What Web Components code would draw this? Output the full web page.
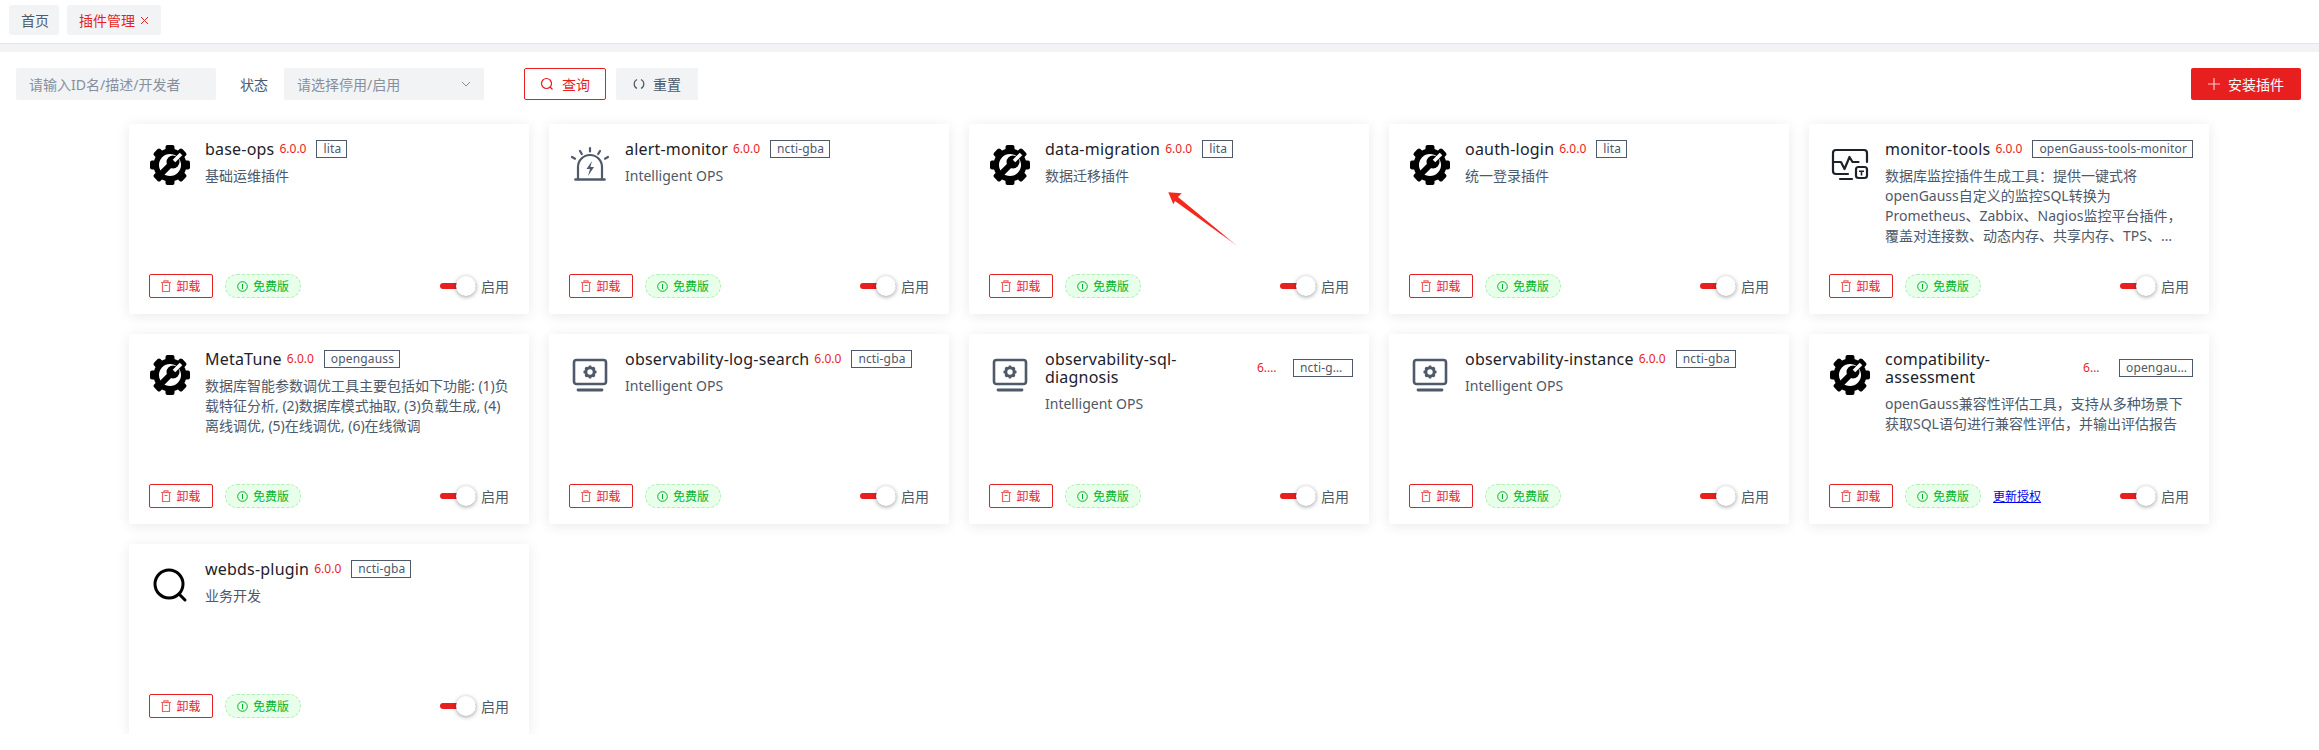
<!DOCTYPE html>
<html>
<head>
<meta charset="utf-8">
<title>插件管理</title>
<style>
  html, body { margin: 0; background: #fff; }
  body { font-family: "Noto Sans", "Noto Sans CJK SC", sans-serif; color: #1d2129; }
</style>
</head>
<body>
<top-tabs></top-tabs>
<filter-bar></filter-bar>
<plugin-grid>
  <plugin-card name="base-ops" tag="lita" icon="gear">基础运维插件</plugin-card>
  <plugin-card name="alert-monitor" tag="ncti-gba" icon="siren">Intelligent OPS</plugin-card>
  <plugin-card name="data-migration" tag="lita" icon="gear" arrow>数据迁移插件</plugin-card>
  <plugin-card name="oauth-login" tag="lita" icon="gear">统一登录插件</plugin-card>
  <plugin-card name="monitor-tools" tag="openGauss-tools-monitor" icon="tools">数据库监控插件生成工具：提供一键式将openGauss自定义的监控SQL转换为Prometheus、Zabbix、Nagios监控平台插件，覆盖对连接数、动态内存、共享内存、TPS、…</plugin-card>
  <plugin-card name="MetaTune" tag="opengauss" icon="gear">数据库智能参数调优工具主要包括如下功能: (1)负载特征分析, (2)数据库模式抽取, (3)负载生成, (4)离线调优, (5)在线调优, (6)在线微调</plugin-card>
  <plugin-card name="observability-log-search" tag="ncti-gba" icon="screen">Intelligent OPS</plugin-card>
  <plugin-card name="observability-sql-diagnosis" tag="ncti-gba" icon="screen" squeeze="212,25,11,60">Intelligent OPS</plugin-card>
  <plugin-card name="observability-instance" tag="ncti-gba" icon="screen">Intelligent OPS</plugin-card>
  <plugin-card name="compatibility-assessment" tag="opengauss" icon="gear" squeeze="198,19,17,74" license>openGauss兼容性评估工具，支持从多种场景下获取SQL语句进行兼容性评估，并输出评估报告</plugin-card>
  <plugin-card name="webds-plugin" tag="ncti-gba" icon="search">业务开发</plugin-card>
</plugin-grid>

<script>
// icons for the cards, all in a 42x42 box
const gearTeeth = [0, 45, 90, 135, 180, 225, 270, 315]
  .map(a => `<rect x="16.500" y="1" width="9" height="9" rx="2" transform="rotate(${a} 21 21)"/>`).join('');
const ICONS = {
  gear: `<g fill="#000">${gearTeeth}<circle cx="21" cy="21" r="16.500"/></g>
    <circle cx="21" cy="21" r="11" fill="#fff"/>
    <path d="M11 31 L22 20" stroke="#000" stroke-width="6" fill="none"/>
    <circle cx="24" cy="18" r="6.500" fill="#000"/>
    <path d="M25 17 L32 10" stroke="#fff" stroke-width="3.600" fill="none"/>`,
  siren: `<g fill="none" stroke="#4e5969" stroke-width="2.200" stroke-linecap="round">
      <path d="M9 35V23a12 12 0 0 1 24 0v12"/><path d="M6.500 35.500h29" stroke-width="2.600"/>
      <path d="M21 4v3.500M11 7l1.800 3M31 7l-1.800 3M3 13l3 1.700M39 13l-3 1.700"/></g>
    <path d="M23 17l-5.500 8H21l-2 7 6-9h-3.600z" fill="#4e5969"/>`,
  tools: `<g fill="none" stroke="#1d2129" stroke-width="2.200" stroke-linecap="round" stroke-linejoin="round">
      <path d="M19 30H7a3 3 0 0 1-3-3V9a3 3 0 0 1 3-3h28a3 3 0 0 1 3 3v9"/>
      <path d="M4 18h8l3.500 7 5-12 3 5h6"/><path d="M11 35h12"/>
      <rect x="27" y="23" width="11" height="11" rx="2.500"/></g>
    <path d="M30 26.500h5v1.500h-1.700v3.500h-1.600V28H30z" fill="#1d2129"/>`,
  screen: `<g fill="none" stroke="#4e5969"><rect x="5" y="6" width="32" height="24" rx="2.500" stroke-width="2.600"/>
      <path d="M9 36h24" stroke-width="2.800" stroke-linecap="round"/>
      <circle cx="21" cy="18" r="4.200" stroke-width="3"/>
      <path d="M21 11.500v2M21 22.500v2M14.500 18h2M25.500 18h2M16.400 13.400l1.400 1.400M24.200 21.200l1.400 1.400M25.600 13.400l-1.400 1.400M17.800 21.200l-1.400 1.400" stroke-width="2.400"/></g>`,
  search: `<g fill="none" stroke="#000" stroke-width="3"><circle cx="20" cy="20" r="14"/>
      <path d="M30 30l6 6" stroke-linecap="round"/></g>`
};

const FONT = `font-family: "Noto Sans", "Noto Sans CJK SC", sans-serif;`;

class TopTabs extends HTMLElement {
  constructor() {
    super();
    this.attachShadow({ mode: 'open' });
    this.shadowRoot.innerHTML = `
      <style>
        :host { display: block; ${FONT} }
        .bar { display: flex; gap: 8px; height: 44px; box-sizing: border-box;
               padding: 5px 9px 0; border-bottom: 1px solid #e5e6eb; }
        .band { height: 8px; background: #f2f3f5; }
        .tab { display: flex; align-items: center; height: 30px; padding: 0 10px 0 12px; background: #f2f3f5;
               border-radius: 3px; font-size: 14px; color: #4e5969; }
        .on { color: #e71f1f; padding-right: 12px; }
        svg { margin-left: 5px; }
      </style>
      <div class="bar">
        <div class="tab">首页</div>
        <div class="tab on">插件管理
          <svg width="9" height="9" viewBox="0 0 9 9"><path d="M1 1l7 7M8 1L1 8" stroke="#e71f1f" fill="none"/></svg>
        </div>
      </div>
      <div class="band"></div>`;
  }
}
customElements.define('top-tabs', TopTabs);

class FilterBar extends HTMLElement {
  constructor() {
    super();
    this.attachShadow({ mode: 'open' });
    this.shadowRoot.innerHTML = `
      <style>
        :host { display: block; ${FONT} }
        .row { display: flex; align-items: center; padding: 16px 18px 0 16px; font-size: 14px; }
        .field { display: flex; align-items: center; justify-content: space-between; box-sizing: border-box;
                 width: 200px; height: 32px; padding: 0 12px 0 13px; background: #f2f3f5; border-radius: 2px; color: #86909c; }
        .label { margin: 0 16px 0 24px; color: #4e5969; }
        .btn { display: flex; align-items: center; justify-content: center; gap: 8px; box-sizing: border-box;
               width: 82px; height: 32px; border-radius: 2px; }
        .query { margin-left: 40px; border: 1px solid #e71f1f; color: #e71f1f; }
        .reset { margin-left: 10px; background: #f2f3f5; color: #4e5969; }
        .add { margin-left: auto; width: 110px; background: #e71f1f; color: #fff; gap: 8px; }
      </style>
      <div class="row">
        <div class="field">请输入ID名/描述/开发者</div>
        <div class="label">状态</div>
        <div class="field">请选择停用/启用
          <svg width="12" height="12" viewBox="0 0 12 12"><path d="M2 4l4 4 4-4" fill="none" stroke="#86909c"/></svg>
        </div>
        <div class="btn query">
          <svg width="14" height="14" viewBox="0 0 14 14" fill="none" stroke="#e71f1f" stroke-width="1.200"><circle cx="6.500" cy="6.500" r="5"/><path d="M10 10l2.500 2.500"/></svg>
          查询</div>
        <div class="btn reset">
          <svg width="12" height="12" viewBox="0 0 12 12" fill="none" stroke="#4e5969" stroke-width="1.200"><path d="M4 1.500A5 5 0 0 0 4 10.500M8 1.500A5 5 0 0 1 8 10.500"/></svg>
          重置</div>
        <div class="btn add">
          <svg width="12" height="12" viewBox="0 0 12 12" stroke="#fff" opacity=".75" stroke-width="1.200"><path d="M6 0v12M0 6h12"/></svg>
          安装插件</div>
      </div>`;
  }
}
customElements.define('filter-bar', FilterBar);

class PluginGrid extends HTMLElement {
  constructor() {
    super();
    this.attachShadow({ mode: 'open' });
    this.shadowRoot.innerHTML = `
      <style>
        :host { display: grid; grid-template-columns: repeat(5, 400px); gap: 20px;
                padding: 24px 0 0 129px; }
      </style>
      <slot></slot>`;
  }
}
customElements.define('plugin-grid', PluginGrid);

class PluginCard extends HTMLElement {
  constructor() {
    super();
    this.attachShadow({ mode: 'open' });
  }

  connectedCallback() {
    this.render();
  }

  render() {
    const name = this.getAttribute('name');
    const tag = this.getAttribute('tag');
    const icon = ICONS[this.getAttribute('icon')];
    // squeeze = name box, version box, gap before tag, tag box: for the long names that wrap
    const squeeze = this.getAttribute('squeeze');
    let headStyle = '';
    if (squeeze) {
      const [nameW, verW, gap, tagW] = squeeze.split(',');
      headStyle = `--name-w:${nameW}px;--ver-w:${verW}px;--tag-gap:${gap}px;--tag-w:${tagW}px`;
    }
    const arrow = this.hasAttribute('arrow') ? `
      <svg class="arrow" width="400" height="190" viewBox="0 0 400 190">
        <defs><linearGradient id="fade" x1="0" y1="0" x2="1" y2="1">
          <stop offset="0" stop-color="#f5281e"/><stop offset=".75" stop-color="#f5281e"/><stop offset="1" stop-color="#f5281e" stop-opacity=".3"/>
        </linearGradient></defs>
        <polygon fill="url(#fade)" points="199.300,68.300 212.700,69.300 209,73 269.300,122.700 206,77 204.300,80.300"/>
      </svg>` : '';
    const license = this.hasAttribute('license') ? '<a class="license">更新授权</a>' : '';
    this.shadowRoot.innerHTML = `
      <style>
        :host { display: block; ${FONT} }
        .card { position: relative; display: flex; flex-direction: column; box-sizing: border-box;
                height: 190px; padding: 16px 20px; background: #fff; border-radius: 2px;
                box-shadow: 0 2px 14px rgba(0,0,0,.09); }
        .body { display: flex; flex: 1; min-height: 0; }
        .icon { flex: none; width: 42px; height: 42px; margin: 4px 14px 0 0; }
        .main { flex: 1; min-width: 0; }
        .head { display: flex; align-items: center; min-height: 18px; }
        .name { flex: none; font-size: 16px; line-height: 18px; letter-spacing: .2px; color: #1d2129; white-space: nowrap; }
        .ver { flex: none; margin-left: 5px; font-size: 12px; line-height: 18px; color: #e71f1f; }
        .tag { flex: none; box-sizing: border-box; height: 18px; margin-left: 10px; padding: 0 5px 0 6px;
               border: 1px solid #4e5969; font-size: 12px; line-height: 16px; letter-spacing: .15px; color: #4e5969; white-space: nowrap; }
        .squeezed .name { box-sizing: border-box; width: calc(var(--name-w) - 6px); padding-right: 40px; white-space: normal; }
        .squeezed .ver { width: var(--ver-w); margin-left: 6px; overflow: hidden; text-overflow: ellipsis; white-space: nowrap; }
        .squeezed .tag { width: var(--tag-w); margin-left: var(--tag-gap); overflow: hidden; text-overflow: ellipsis; }
        .desc { margin-top: 8px; font-size: 14px; line-height: 20px; color: #4e5969;
                display: -webkit-box; -webkit-box-orient: vertical; -webkit-line-clamp: 4; overflow: hidden; }
        .foot { display: flex; align-items: center; height: 24px; font-size: 12px; }
        .del { display: flex; align-items: center; justify-content: center; gap: 5px; box-sizing: border-box;
               width: 64px; height: 24px; border: 1px solid #e71f1f; border-radius: 2px; color: #e71f1f; }
        .free { display: flex; align-items: center; justify-content: center; gap: 5px; box-sizing: border-box;
                width: 76px; height: 24px; margin-left: 12px; border: 1px dashed #aff0b5; border-radius: 12px;
                background: #e8ffea; color: #00b42a; }
        .license { margin-left: 12px; color: #0000ee; text-decoration: underline; }
        .switch { margin-left: auto; display: flex; align-items: center; font-size: 14px; color: #4e5969; }
        .track { position: relative; width: 36px; height: 6px; background: #e71f1f; border-radius: 3px; margin-right: 5px; }
        .knob { position: absolute; right: 0; top: -7px; width: 20px; height: 20px; border-radius: 50%; background: #fff;
                box-shadow: 0 1px 4px rgba(29,33,41,.45); }
        .arrow { position: absolute; left: 0; top: 0; pointer-events: none; }
      </style>
      <div class="card ${squeeze ? 'squeezed' : ''}" style="${headStyle}">
        <div class="body">
          <svg class="icon" viewBox="0 0 42 42">${icon}</svg>
          <div class="main">
            <div class="head">
              <span class="name">${name}</span>
              <span class="ver">6.0.0</span>
              <span class="tag">${tag}</span>
            </div>
            <div class="desc"><slot></slot></div>
          </div>
        </div>
        <div class="foot">
          <div class="del">
            <svg width="10" height="12" viewBox="0 0 10 12" fill="none" stroke="#e71f1f" stroke-width="1.200" opacity=".7"><path d="M0 2.500h10M3 2.500V.8h4v1.700M1.500 2.500v9h7v-9M3.500 5.500h3"/></svg>
            卸载</div>
          <div class="free">
            <svg width="11" height="11" viewBox="0 0 11 11" fill="none" stroke="#00b42a"><circle cx="5.500" cy="5.500" r="4.800"/><path d="M5.500 3v5"/></svg>
            免费版</div>
          ${license}
          <div class="switch"><div class="track"><div class="knob"></div></div>启用</div>
        </div>
        ${arrow}
      </div>`;
  }
}
customElements.define('plugin-card', PluginCard);
</script>
</body>
</html>
